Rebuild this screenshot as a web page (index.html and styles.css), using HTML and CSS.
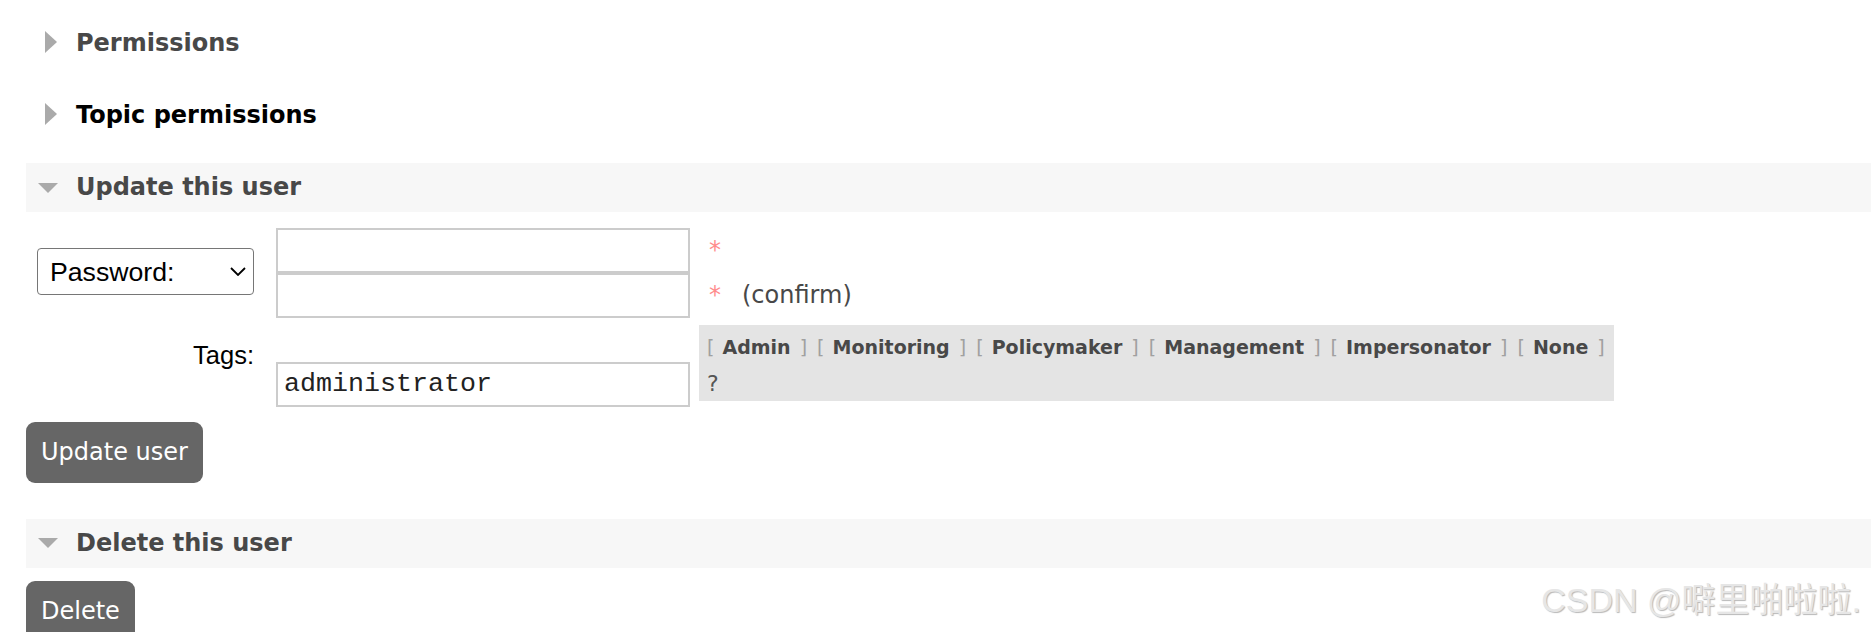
FILE: index.html
```html
<!DOCTYPE html>
<html lang="en">
<head>
<meta charset="utf-8">
<title>User</title>
<link rel="stylesheet" href="styles.css">
</head>
<body>
<div class="page">
  <div class="section section-hidden">
    <h2 class="section-title"><span class="arrow arrow-right"><svg width="12" height="22" viewBox="0 0 12 22"><polygon points="0,0 12,11 0,22" fill="#aaaaaa"/></svg></span><span class="title-text">Permissions</span></h2>
  </div>
  <div class="section section-hidden">
    <h2 class="section-title title-hover"><span class="arrow arrow-right"><svg width="12" height="22" viewBox="0 0 12 22"><polygon points="0,0 12,11 0,22" fill="#aaaaaa"/></svg></span><span class="title-text">Topic permissions</span></h2>
  </div>
  <div class="section section-open">
    <h2 class="section-title"><span class="arrow arrow-down"><svg width="20" height="10" viewBox="0 0 20 10"><polygon points="0,0 20,0 10,10" fill="#aaaaaa"/></svg></span><span class="title-text">Update this user</span></h2>
    <div class="section-body update-body">
      <form class="user-form">
        <div class="form-row pw-row">
          <div class="form-label label-middle">
            <div class="select-wrap">
              <select class="pw-select"><option>Password:</option></select>
              <svg class="chev" width="16" height="9" viewBox="0 0 16 9"><polyline points="1,1 8,8 15,1" fill="none" stroke="#000" stroke-width="1.8"/></svg>
            </div>
          </div>
          <div class="form-field">
            <div class="input-line"><input type="password" class="text-input"><span class="mand">*</span></div>
            <div class="input-line"><input type="password" class="text-input"><span class="mand">*</span><span class="confirm">(confirm)</span></div>
          </div>
        </div>
        <div class="form-row tags-row">
          <div class="form-label label-top"><label class="tags-label">Tags:</label></div>
          <div class="form-field tags-field"><input type="text" class="text-input" value="administrator"><div class="tag-help"><div class="tag-links"><span class="tag-item"><span class="br">[</span> <b class="tag-link">Admin</b> <span class="br">]</span></span><span class="tag-item"><span class="br">[</span> <b class="tag-link">Monitoring</b> <span class="br">]</span></span><span class="tag-item"><span class="br">[</span> <b class="tag-link">Policymaker</b> <span class="br">]</span></span><span class="tag-item"><span class="br">[</span> <b class="tag-link">Management</b> <span class="br">]</span></span><span class="tag-item"><span class="br">[</span> <b class="tag-link">Impersonator</b> <span class="br">]</span></span><span class="tag-item"><span class="br">[</span> <b class="tag-link">None</b> <span class="br">]</span></span></div><div class="help-line"><span class="help">?</span></div></div></div>
        </div>
        <button type="button" class="btn">Update user</button>
      </form>
    </div>
  </div>
  <div class="section section-open">
    <h2 class="section-title"><span class="arrow arrow-down"><svg width="20" height="10" viewBox="0 0 20 10"><polygon points="0,0 20,0 10,10" fill="#aaaaaa"/></svg></span><span class="title-text">Delete this user</span></h2>
    <div class="section-body delete-body">
      <button type="button" class="btn">Delete</button>
    </div>
  </div>
</div>
<div class="watermark">CSDN @噼里啪啦啦.</div>
</body>
</html>
```

FILE: styles.css
```css
* {
  box-sizing: border-box;
}

html {
  overflow: hidden;
}

body {
  margin: 0;
  background: #ffffff;
  font-family: "DejaVu Sans", Verdana, sans-serif;
  font-size: 24px;
  color: #484848;
}

.page {
  padding: 19px 0 0 26px;
}

.section {
  margin-bottom: 23px;
}

.section-title {
  display: flex;
  align-items: center;
  margin: 0;
  height: 49px;
  font-size: 24px;
  font-weight: bold;
  line-height: 29px;
  color: #484848;
}

.section-open .section-title {
  background: #f7f7f7;
}

.title-hover {
  color: #000000;
}

.arrow {
  display: flex;
  align-items: center;
  width: 50px;
  height: 29px;
}

.arrow svg {
  display: block;
}

.arrow-right {
  padding-left: 19px;
  margin-top: -3px;
}

.arrow-down {
  padding-left: 12px;
}

.section-body {
  padding-bottom: 13px;
}

.update-body {
  padding-top: 16px;
}

.delete-body {
  padding-top: 13px;
}

.form-row {
  display: flex;
}

.tags-row {
  margin-top: 7px;
}

.form-label {
  width: 228px;
  display: flex;
  justify-content: flex-end;
}

.label-middle {
  align-items: center;
}

.label-top {
  align-items: flex-start;
  padding-top: 16px;
}

.form-field {
  margin-left: 22px;
}

.select-wrap {
  position: relative;
  width: 217px;
  height: 47px;
  margin-top: -3px;
}

.pw-select {
  -webkit-appearance: none;
  appearance: none;
  display: block;
  width: 217px;
  height: 47px;
  margin: 0;
  padding: 0 0 0 12px;
  border: 1px solid #767676;
  border-radius: 4px;
  background: #ffffff;
  font-family: "Liberation Sans", Arial, sans-serif;
  font-size: 26.67px;
  color: #000000;
}

.chev {
  position: absolute;
  right: 8px;
  top: 19px;
  pointer-events: none;
}

.input-line {
  display: flex;
  align-items: baseline;
}

.text-input {
  display: inline-block;
  width: 414px;
  height: 45px;
  margin: 0;
  padding: 5px 6px;
  border: 2px solid #cccccc;
  border-radius: 0;
  background: #ffffff;
  font-family: "Liberation Mono", "Courier New", monospace;
  font-size: 26.67px;
  line-height: normal;
  color: #222222;
  outline: none;
}

.mand {
  margin-left: 19px;
  color: #ff8c8c;
  font-size: 24px;
}

.confirm {
  margin-left: 21px;
  color: #484848;
}

.tags-label {
  font-family: "Liberation Sans", Arial, sans-serif;
  font-size: 25.5px;
  line-height: 28px;
  color: #000000;
}

.tags-field {
  font-size: 24px;
  white-space: nowrap;
}

.tags-field .text-input {
  vertical-align: baseline;
}

.tag-help {
  display: inline-block;
  vertical-align: baseline;
  margin-left: 9px;
  padding: 8px 9px 2px 8px;
  background: #e4e4e4;
}

.tag-links {
  font-size: 19px;
  line-height: 28px;
}

.tag-item + .tag-item {
  margin-left: 10px;
}

.br {
  color: #a0a0a0;
}

.tag-link {
  padding: 0 3px 0 2px;
  font-weight: bold;
  color: #484848;
}

.help-line {
  padding-top: 7px;
  font-size: 22px;
  line-height: 31px;
}

.help {
  color: #555555;
}

.btn {
  display: block;
  margin: 15px 0 0 0;
  padding: 16px 15px;
  border: none;
  border-radius: 9px;
  background: #666666;
  color: #ffffff;
  font-family: "DejaVu Sans", Verdana, sans-serif;
  font-size: 24px;
  line-height: 29px;
}

.delete-body .btn {
  margin-top: 0;
}

.watermark {
  position: absolute;
  right: 10px;
  top: 580px;
  font-family: "Liberation Sans", Arial, "Noto Sans CJK SC", sans-serif;
  font-size: 34px;
  line-height: 40px;
  color: #e6e6e6;
  text-shadow: 1px 1px 1px #b8b8b8;
  white-space: nowrap;
}
```
